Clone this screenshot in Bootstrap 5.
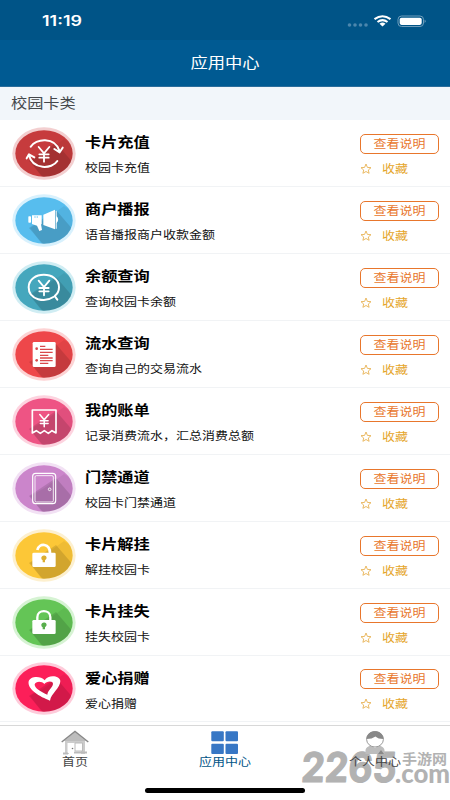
<!DOCTYPE html>
<html lang="zh-CN">
<head>
<meta charset="utf-8">
<meta name="viewport" content="width=device-width, initial-scale=1">
<title>应用中心</title>
<link href="https://cdn.jsdelivr.net/npm/bootstrap@5.3.0/dist/css/bootstrap.min.css" rel="stylesheet">
<style>
body{font-family:"Liberation Sans","Noto Sans CJK SC",sans-serif;color:#000;background:#fff}
.screen{width:450px;height:800px}
.squash{display:inline-block;transform:scaleY(.87);white-space:nowrap;line-height:20px;font-family:"Noto Sans CJK SC",sans-serif}
.status{height:40px;background:#005487;padding:1px 24px 0 42px}
.titlebar{height:47px;background:#005a92;font-size:17.3px;border-bottom:1px solid #2b6d9b;padding-bottom:2px}
.section{height:33px;background:#f2f6fa;font-size:16.2px;color:#45484b;padding:0 0 3px 11px}
.app{height:66.95px;border-bottom:1px solid #f1f3f5;padding:1px 11px 0 11.5px}
.app-icon{width:64px;height:53px;margin-right:9.5px}
.app-name{font-size:16.2px;font-weight:700;margin-bottom:7px}
.app-text{padding-top:3px}
.app-desc{font-size:13px;color:#111}
.side{width:79px;padding-top:6px}
.btn-info-line{height:20px;border:1.3px solid #e8762c;border-radius:5px;color:#e8762c;font-size:13px;width:79px;margin-bottom:5px}
.fav{color:#e5a62c;font-size:13px;height:20px}
.fav svg{margin-right:10px}
.tabs{height:75px;border-top:1px solid #d8d8d8;margin-top:2.5px;padding-top:4px}
.tab{width:150px;font-size:13px;color:#444}
.tab.on{color:#005487}
.tab svg{display:block;height:26px;margin-bottom:-3.5px}
.indicator{left:145px;top:788px;width:160px;height:5px;background:#000;border-radius:3px}
.stamp{left:298px;top:746px}
</style>
<script src="https://cdn.jsdelivr.net/npm/bootstrap@5.3.0/dist/js/bootstrap.bundle.min.js"></script>
</head>
<body>
<svg width="0" height="0" class="position-absolute">
<defs>
<clipPath id="disc"><ellipse cx="96" cy="79.5" rx="86" ry="70"/></clipPath>
<g id="shade" clip-path="url(#disc)"><path d="M55 102L96 79L156 36L192 60V159H95Z" fill="#000" opacity=".05"/><path d="M51 102L132 48L192 118V159H100Z" fill="#000" opacity=".12"/></g>
<path id="yen" d="M80 60L96 79L112 60M96 79V104M82 82H110M82 92H110" fill="none" stroke="#fff" stroke-width="5.5" stroke-linecap="round"/>
<path id="star" d="M6 1L7.4 4.4L11 4.7L8.3 7L9.1 10.3L6 8.5L2.9 10.3L3.7 7L1 4.7L4.6 4.4Z" fill="none" stroke="#e8b254" stroke-width=".9"/>
</defs>
</svg>
<main class="screen position-relative overflow-hidden d-flex flex-column">
<header class="text-white">
<div class="status d-flex align-items-center justify-content-between">
<svg width="44" height="16" viewBox="0 0 44 16"><text x="0" y="13" font-family="Inter, sans-serif" font-weight="600" font-size="14" textLength="40" lengthAdjust="spacingAndGlyphs" fill="#fff">11:19</text></svg>
<svg width="80" height="16" viewBox="0 0 80 16">
<g fill="#4c87ad"><circle cx="3.5" cy="12" r="1.8"/><circle cx="9" cy="12" r="1.8"/><circle cx="14.500" cy="12" r="1.8"/><circle cx="20" cy="12" r="1.8"/></g>
<g fill="none" stroke="#fff" stroke-width="2.1"><path d="M28.500 6.200Q36.500 .4 44.500 6.200"/><path d="M31.500 9Q36.500 5.300 41.500 9"/></g>
<path d="M33.500 10.700Q36.500 8.500 39.500 10.700L36.500 13.500Z" fill="#fff"/>
<rect x="52" y="3" width="25.500" height="10.500" rx="3.500" fill="none" stroke="#6f9dbb"/><rect x="53.700" y="4.700" width="22" height="7.200" rx="1.800" fill="#fff"/><path d="M78.700 6.500Q80.500 8.300 78.700 10Z" fill="#8fb3ca"/>
</svg>
</div>
<div class="titlebar d-flex align-items-center justify-content-center"><span class="squash">应用中心</span></div>
</header>
<div class="section d-flex align-items-center"><span class="squash">校园卡类</span></div>

<section>
<article class="app d-flex align-items-center">
<svg class="app-icon" viewBox="0 0 192 159"><ellipse cx="96" cy="79.500" rx="95" ry="79" fill="#f3cfd0"/><ellipse cx="96" cy="79.500" rx="86" ry="70" fill="#c63b3d"/><use href="#shade"/><use href="#yen"/><g fill="none" stroke="#fff" stroke-width="6" stroke-linecap="round" stroke-linejoin="round"><path d="M56 59C70 35 129 27 143 73M127 66L143 76L152 62M136 102C120 127 62 129 51 85M44 94L51 82L67 91"/></g></svg>
<div class="app-text flex-grow-1 d-flex flex-column align-items-start"><span class="squash app-name">卡片充值</span><span class="squash app-desc">校园卡充值</span></div>
<div class="side"><button class="btn btn-info-line p-0 d-flex align-items-center justify-content-center"><span class="squash">查看说明</span></button><div class="fav d-flex align-items-center"><svg width="12" height="12"><use href="#star"/></svg><span class="squash">收藏</span></div></div>
</article>

<article class="app d-flex align-items-center">
<svg class="app-icon" viewBox="0 0 192 159"><ellipse cx="96" cy="79.500" rx="95" ry="79" fill="#d8f1fd"/><ellipse cx="96" cy="79.500" rx="86" ry="70" fill="#57bdee"/><use href="#shade"/><g fill="#fff"><rect x="49" y="67" width="8" height="19" rx="2"/><path d="M60 64H89V91H87L90 108L82 111L75 95L60 90ZM94 62L129 47V106L94 93Z"/><path d="M131 50H134V67Q143 76 134 87V104H131Z"/></g><path d="M67 69H71M74 69H78" stroke="#57bdee" stroke-width="3"/></svg>
<div class="app-text flex-grow-1 d-flex flex-column align-items-start"><span class="squash app-name">商户播报</span><span class="squash app-desc">语音播报商户收款金额</span></div>
<div class="side"><button class="btn btn-info-line p-0 d-flex align-items-center justify-content-center"><span class="squash">查看说明</span></button><div class="fav d-flex align-items-center"><svg width="12" height="12"><use href="#star"/></svg><span class="squash">收藏</span></div></div>
</article>

<article class="app d-flex align-items-center">
<svg class="app-icon" viewBox="0 0 192 159"><ellipse cx="96" cy="79.500" rx="95" ry="79" fill="#d0edf3"/><ellipse cx="96" cy="79.500" rx="86" ry="70" fill="#45a7bd"/><use href="#shade"/><use href="#yen" y="-1"/><path d="M124 108C101 124 50 119 50 79C50 29 141 29 141 79Q141 95 128 105L136 116" fill="none" stroke="#fff" stroke-width="6" stroke-linecap="round" stroke-linejoin="round"/></svg>
<div class="app-text flex-grow-1 d-flex flex-column align-items-start"><span class="squash app-name">余额查询</span><span class="squash app-desc">查询校园卡余额</span></div>
<div class="side"><button class="btn btn-info-line p-0 d-flex align-items-center justify-content-center"><span class="squash">查看说明</span></button><div class="fav d-flex align-items-center"><svg width="12" height="12"><use href="#star"/></svg><span class="squash">收藏</span></div></div>
</article>

<article class="app d-flex align-items-center">
<svg class="app-icon" viewBox="0 0 192 159"><ellipse cx="96" cy="79.500" rx="95" ry="79" fill="#fdd3d4"/><ellipse cx="96" cy="79.500" rx="86" ry="70" fill="#ee474a"/><use href="#shade"/><rect x="62" y="42" width="69" height="75" rx="4" fill="#fff"/><path d="M84 55H100M84 64H122M84 73H122M84 82H109M84 90H122M84 98H122M84 106H109" stroke="#d9484b" stroke-width="4"/><circle cx="74" cy="62" r="4" fill="#d9484b"/><circle cx="74" cy="97" r="4" fill="#d9484b"/></svg>
<div class="app-text flex-grow-1 d-flex flex-column align-items-start"><span class="squash app-name">流水查询</span><span class="squash app-desc">查询自己的交易流水</span></div>
<div class="side"><button class="btn btn-info-line p-0 d-flex align-items-center justify-content-center"><span class="squash">查看说明</span></button><div class="fav d-flex align-items-center"><svg width="12" height="12"><use href="#star"/></svg><span class="squash">收藏</span></div></div>
</article>

<article class="app d-flex align-items-center">
<svg class="app-icon" viewBox="0 0 192 159"><ellipse cx="96" cy="79.500" rx="95" ry="79" fill="#fdd3df"/><ellipse cx="96" cy="79.500" rx="86" ry="70" fill="#ee5484"/><use href="#shade"/><path d="M61 45H132V114L120 107L109 115L97 107L85 115L73 107L61 114Z" fill="none" stroke="#fff" stroke-width="5" stroke-linejoin="round"/><use href="#yen" transform="translate(17 9) scale(.83)"/></svg>
<div class="app-text flex-grow-1 d-flex flex-column align-items-start"><span class="squash app-name">我的账单</span><span class="squash app-desc">记录消费流水，汇总消费总额</span></div>
<div class="side"><button class="btn btn-info-line p-0 d-flex align-items-center justify-content-center"><span class="squash">查看说明</span></button><div class="fav d-flex align-items-center"><svg width="12" height="12"><use href="#star"/></svg><span class="squash">收藏</span></div></div>
</article>

<article class="app d-flex align-items-center">
<svg class="app-icon" viewBox="0 0 192 159"><ellipse cx="96" cy="79.500" rx="95" ry="79" fill="#f2e1f4"/><ellipse cx="96" cy="79.500" rx="86" ry="70" fill="#cb85cb"/><use href="#shade"/><g fill="none" stroke="#fff"><rect x="62" y="34" width="69" height="91" rx="9" stroke-width="3.500"/><rect x="69" y="41" width="55" height="79" rx="4" stroke-width="2.500"/><circle cx="113" cy="82" r="4" stroke-width="2.500"/></g></svg>
<div class="app-text flex-grow-1 d-flex flex-column align-items-start"><span class="squash app-name">门禁通道</span><span class="squash app-desc">校园卡门禁通道</span></div>
<div class="side"><button class="btn btn-info-line p-0 d-flex align-items-center justify-content-center"><span class="squash">查看说明</span></button><div class="fav d-flex align-items-center"><svg width="12" height="12"><use href="#star"/></svg><span class="squash">收藏</span></div></div>
</article>

<article class="app d-flex align-items-center">
<svg class="app-icon" viewBox="0 0 192 159"><ellipse cx="96" cy="79.500" rx="95" ry="79" fill="#fdf0cf"/><ellipse cx="96" cy="79.500" rx="86" ry="70" fill="#fcc737"/><use href="#shade"/><rect x="61" y="71" width="70" height="43" rx="4" fill="#fff"/><path d="M76 63C82 40 114 43 114 73" fill="none" stroke="#fff" stroke-width="8"/><path d="M88 88A8 7 0 1 1 102 91L99 94V100H92V94Q88 92 88 88Z" fill="#dcae31"/></svg>
<div class="app-text flex-grow-1 d-flex flex-column align-items-start"><span class="squash app-name">卡片解挂</span><span class="squash app-desc">解挂校园卡</span></div>
<div class="side"><button class="btn btn-info-line p-0 d-flex align-items-center justify-content-center"><span class="squash">查看说明</span></button><div class="fav d-flex align-items-center"><svg width="12" height="12"><use href="#star"/></svg><span class="squash">收藏</span></div></div>
</article>

<article class="app d-flex align-items-center">
<svg class="app-icon" viewBox="0 0 192 159"><ellipse cx="96" cy="79.500" rx="95" ry="79" fill="#d6f3d3"/><ellipse cx="96" cy="79.500" rx="86" ry="70" fill="#64c556"/><use href="#shade"/><rect x="61" y="72" width="70" height="42" rx="4" fill="#fff"/><path d="M76 74V64C76 39 115 39 115 64V74" fill="none" stroke="#fff" stroke-width="7"/><path d="M88 88A8 7 0 1 1 102 91L99 94V100H92V94Q88 92 88 88Z" fill="#59ae4c"/></svg>
<div class="app-text flex-grow-1 d-flex flex-column align-items-start"><span class="squash app-name">卡片挂失</span><span class="squash app-desc">挂失校园卡</span></div>
<div class="side"><button class="btn btn-info-line p-0 d-flex align-items-center justify-content-center"><span class="squash">查看说明</span></button><div class="fav d-flex align-items-center"><svg width="12" height="12"><use href="#star"/></svg><span class="squash">收藏</span></div></div>
</article>

<article class="app d-flex align-items-center">
<svg class="app-icon" viewBox="0 0 192 159"><ellipse cx="96" cy="79.500" rx="95" ry="79" fill="#fecbda"/><ellipse cx="96" cy="79.500" rx="86" ry="70" fill="#fc1f59"/><use href="#shade"/><path fill="#fff" fill-rule="evenodd" d="M98 55C86 41 55 42 50 58C45 82 84 105 114 116C117 95 145 78 145 57C144 40 108 36 98 55ZM97 66C103 57 124 55 123 66C121 78 107 85 106 98C89 91 67 79 68 67C71 57 90 57 97 66Z"/></svg>
<div class="app-text flex-grow-1 d-flex flex-column align-items-start"><span class="squash app-name">爱心捐赠</span><span class="squash app-desc">爱心捐赠</span></div>
<div class="side"><button class="btn btn-info-line p-0 d-flex align-items-center justify-content-center"><span class="squash">查看说明</span></button><div class="fav d-flex align-items-center"><svg width="12" height="12"><use href="#star"/></svg><span class="squash">收藏</span></div></div>
</article>
</section>

<svg class="stamp position-absolute" width="152" height="44" viewBox="0 0 152 44" fill="#b2b2b2">
<g font-family="Inter, sans-serif" font-weight="700" font-size="41" stroke="#b2b2b2" stroke-width="1.2" stroke-linejoin="round"><text x="3" y="36" textLength="95" lengthAdjust="spacingAndGlyphs" transform="skewX(-4) translate(2 0)">2265</text></g>
<text x="97" y="36.500" font-family="Lato, sans-serif" font-weight="900" font-size="26" textLength="55" lengthAdjust="spacingAndGlyphs">.com</text>
<text x="104" y="18" font-family="Noto Sans CJK SC, sans-serif" font-weight="700" font-size="14" textLength="45" lengthAdjust="spacingAndGlyphs">手游网</text>
</svg>
<nav class="tabs d-flex position-relative">
<div class="tab d-flex flex-column align-items-center"><svg width="28" height="26" viewBox="0 0 28 26"><path d="M4 11L14 3L24 11V24H20V13H8V24H4Z" fill="#ccc"/><path d="M14 2L25 11H3Z" fill="#bdbdbd"/><path d="M.7 12L14 1.500L27.300 12" fill="none" stroke="#888" stroke-width="1.500"/><path d="M6.500 13H13.500V23H6.500Z" fill="#fff"/><path d="M14 13H21.500V21H14Z" fill="#fff" stroke="#bbb"/><path d="M2 23.500H7M13 22.500H26" stroke="#bbb" stroke-width="2"/><circle cx="11.500" cy="18.500" r=".8" fill="#777"/></svg><span class="squash">首页</span></div>
<div class="tab on d-flex flex-column align-items-center"><svg width="28" height="26" viewBox="0 0 28 26" fill="#3777c5"><rect x=".3" y="1.300" width="12.500" height="10" rx="1"/><rect x="14.500" y="1.300" width="12.500" height="10" rx="1"/><rect x=".3" y="13.700" width="12.500" height="10.300" rx="1"/><rect x="14.500" y="13.700" width="12.500" height="10.300" rx="1"/></svg><span class="squash">应用中心</span></div>
<div class="tab d-flex flex-column align-items-center"><svg width="24" height="26" viewBox="0 0 24 26"><path d="M2.500 24V20Q3 16.500 8 15.500L12 18L16 15.500Q21 16.500 21.500 20V24Z" fill="#bdbdbd"/><ellipse cx="12" cy="9.300" rx="8.400" ry="7.700" fill="#fff" stroke="#999"/><path d="M3.500 9C3.500-1.500 20.500-1.500 20.500 9Q15 9 12.500 6.500Q9 9 3.500 9Z" fill="#888"/><path d="M15 24L18 20L21 24Z" fill="#888"/></svg><span class="squash">个人中心</span></div>
</nav>
<div class="indicator position-absolute"></div>
</main>
</body>
</html>
